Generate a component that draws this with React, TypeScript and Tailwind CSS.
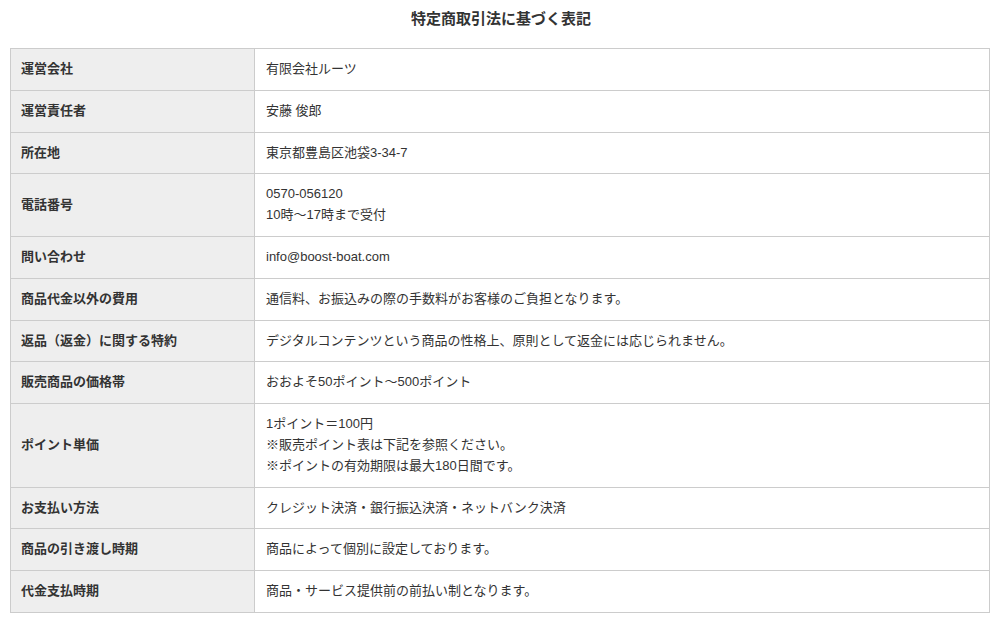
const rows: { label: string; lines: string[] }[] = [
  { label: "運営会社", lines: ["有限会社ルーツ"] },
  { label: "運営責任者", lines: ["安藤 俊郎"] },
  { label: "所在地", lines: ["東京都豊島区池袋3-34-7"] },
  { label: "電話番号", lines: ["0570-056120", "10時〜17時まで受付"] },
  { label: "問い合わせ", lines: ["info@boost-boat.com"] },
  { label: "商品代金以外の費用", lines: ["通信料、お振込みの際の手数料がお客様のご負担となります。"] },
  { label: "返品（返金）に関する特約", lines: ["デジタルコンテンツという商品の性格上、原則として返金には応じられません。"] },
  { label: "販売商品の価格帯", lines: ["おおよそ50ポイント〜500ポイント"] },
  {
    label: "ポイント単価",
    lines: ["1ポイント＝100円", "※販売ポイント表は下記を参照ください。", "※ポイントの有効期限は最大180日間です。"],
  },
  { label: "お支払い方法", lines: ["クレジット決済・銀行振込決済・ネットバンク決済"] },
  { label: "商品の引き渡し時期", lines: ["商品によって個別に設定しております。"] },
  { label: "代金支払時期", lines: ["商品・サービス提供前の前払い制となります。"] },
];

export default function App() {
  return (
    <div className="min-h-screen bg-white px-[10px] text-[#333] font-['Liberation_Sans','Noto_Sans_CJK_JP',sans-serif]">
      {/* Heading */}
      <h1 className="pt-[9px] pb-[19px] text-center text-[15px] font-bold leading-[20px]">
        特定商取引法に基づく表記
      </h1>

      {/* Legal table */}
      <table className="w-[980px] border-collapse text-[13px] leading-[20.8px]">
        <tbody>
          {rows.map((row) => (
            <tr key={row.label}>
              <th className="w-[244px] border border-[#ccc] bg-[#eee] px-[10px] py-[10px] text-left align-middle font-bold">
                {row.label}
              </th>
              <td className="border border-[#ccc] bg-white px-[11px] py-[10px] align-middle">
                {row.lines.map((line, i) => (
                  <div key={i}>{line}</div>
                ))}
              </td>
            </tr>
          ))}
        </tbody>
      </table>
    </div>
  );
}
